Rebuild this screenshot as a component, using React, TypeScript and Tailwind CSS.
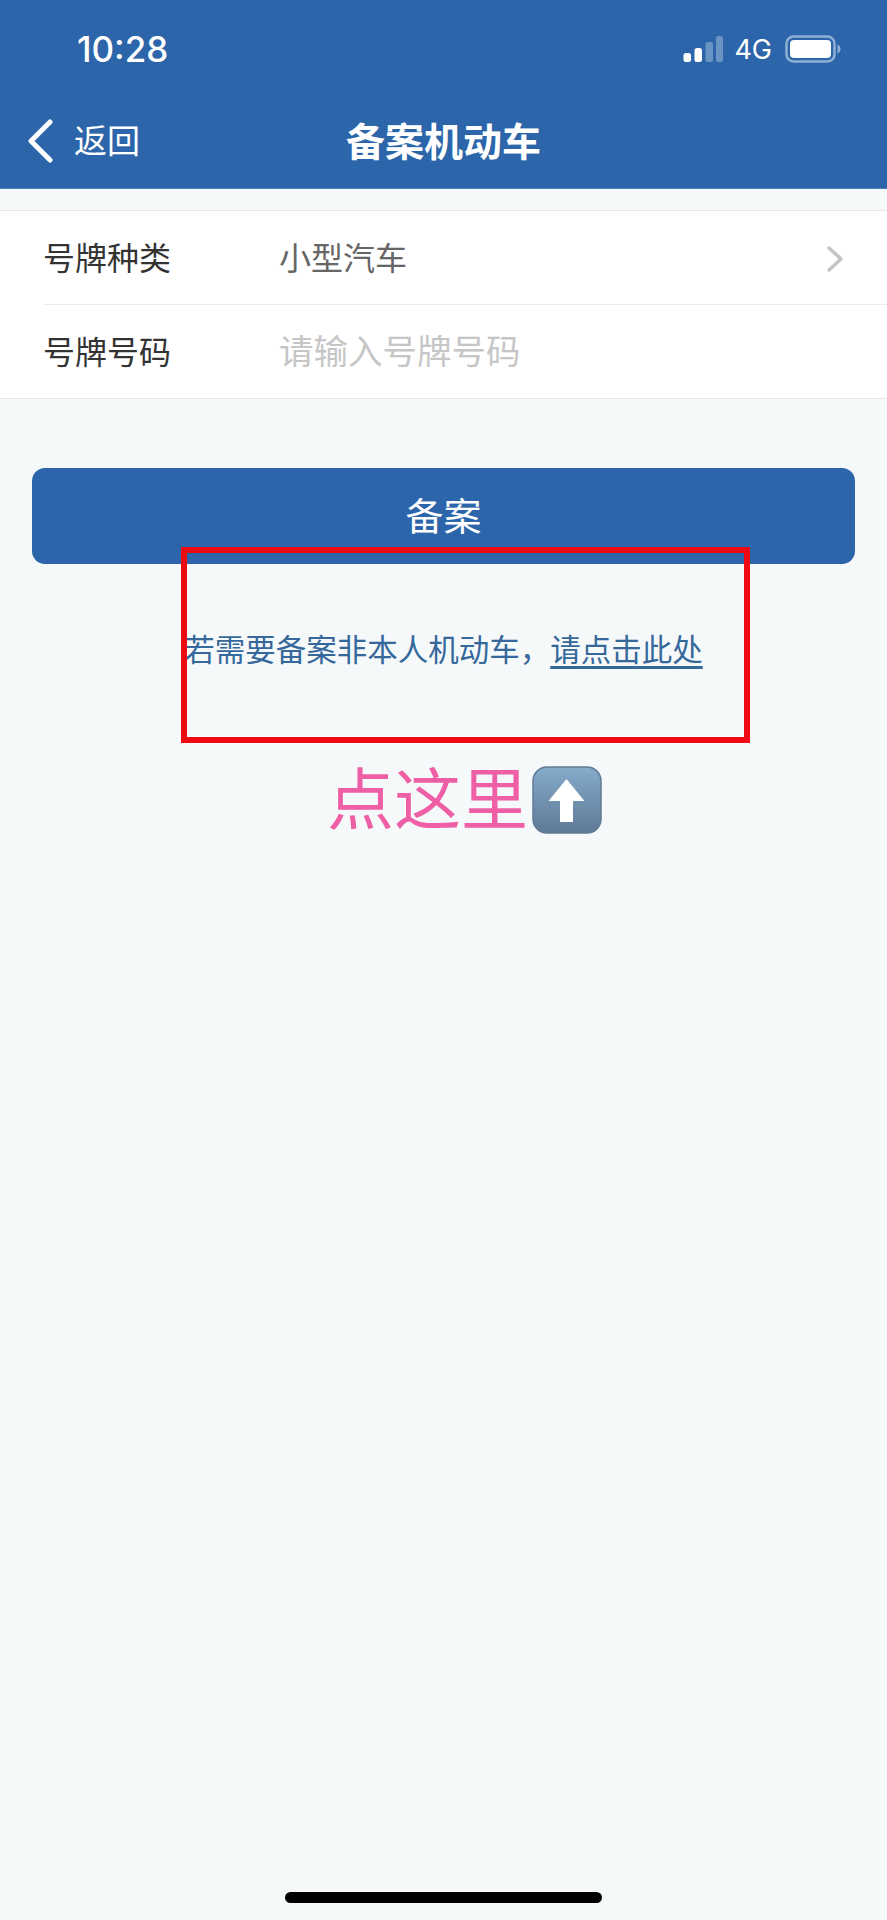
// App.tsx
const CJK = "font-['Inter','Noto_Sans_CJK_SC',sans-serif]";

function StatusIcons() {
  return (
    <div className="flex items-center">
      <svg width="40" height="28" viewBox="0 0 40 28" className="mr-[11px]">
        <rect x="0.5" y="18" width="7.5" height="9" rx="2.5" fill="#ffffff" />
        <rect x="11.5" y="13" width="7.5" height="14" rx="2.5" fill="#ffffff" />
        <rect x="22.5" y="7" width="7.5" height="20" rx="2.5" fill="#6a94c4" />
        <rect x="33" y="1" width="7" height="26" rx="2.5" fill="#6a94c4" />
      </svg>
      <span className="text-[27px] leading-none text-white mr-[13px] font-['Inter',sans-serif]">4G</span>
      <svg width="56" height="28" viewBox="0 0 56 28">
        <rect x="1.5" y="1.5" width="48" height="25" rx="7" fill="none" stroke="#8fb0d4" strokeWidth="2.5" />
        <rect x="5" y="5" width="41" height="18" rx="4" fill="#ffffff" />
        <path d="M52.5 9.5c2 .6 3 2.4 3 4.5s-1 3.9-3 4.5z" fill="#8fb0d4" />
      </svg>
    </div>
  );
}

function Header() {
  return (
    <header className="relative h-[189px] bg-[#2c65a9] border-b border-[#4a7db8]">
      <div className="flex items-center justify-between h-[98px] pl-[77px] pr-[46px]">
        <span className="text-[35px] leading-none font-medium text-white font-['Inter',sans-serif]">10:28</span>
        <StatusIcons />
      </div>
      <div className="relative flex items-center justify-center h-[86px]">
        <div className="absolute left-[27px] top-0 h-full flex items-center">
          <svg width="26" height="44" viewBox="0 0 26 44" fill="none" className="mr-[21px]">
            <path d="M23 3 4 22l19 19" stroke="#ffffff" strokeWidth="5" strokeLinecap="round" strokeLinejoin="round" />
          </svg>
          <span className="text-[33px] leading-none text-white">返回</span>
        </div>
        <h1 className="text-[39px] leading-none font-bold text-white">备案机动车</h1>
      </div>
    </header>
  );
}

function FormRow({ label, children }: { label: string; children: React.ReactNode }) {
  return (
    <div className="flex items-center h-[93px] pt-[2px] pr-[43px]">
      <span className="w-[236px] text-[32px] leading-none text-[#333333]">{label}</span>
      {children}
    </div>
  );
}

function UpArrowEmoji() {
  return (
    <svg width="70" height="68" viewBox="0 0 70 68" className="shrink-0">
      <defs>
        <linearGradient id="keycap" x1="0" y1="0" x2="0" y2="1">
          <stop offset="0" stopColor="#85abcb" />
          <stop offset="1" stopColor="#5e7a96" />
        </linearGradient>
      </defs>
      <rect x="1" y="1" width="68" height="66" rx="14" fill="url(#keycap)" stroke="#5f7b96" strokeWidth="1.5" />
      <path d="M34.5 13 52.5 35H41V56H28V35H16.5z" fill="#ffffff" />
    </svg>
  );
}

export default function App() {
  return (
    <div className={`relative w-[887px] h-[1920px] overflow-hidden bg-[#f5f9fa] flex flex-col ${CJK}`}>
      <Header />

      <section className="mt-[21px] bg-white border-y border-[#e6e8ea] pl-[43px]">
        <div className="border-b border-[#ececec]">
          <FormRow label="号牌种类">
            <span className="flex-1 text-[32px] leading-none text-[#666666]">小型汽车</span>
            <svg width="18" height="26" viewBox="0 0 18 26" fill="none">
              <path d="M3 2l12 11L3 24" stroke="#c4c4c4" strokeWidth="3.5" strokeLinecap="round" strokeLinejoin="round" />
            </svg>
          </FormRow>
        </div>
        <FormRow label="号牌号码">
          <span className="flex-1 text-[34.5px] leading-none text-[#c6c6c6]">请输入号牌号码</span>
        </FormRow>
      </section>

      <button className="mt-[69px] mx-[32px] h-[96px] shrink-0 rounded-[13px] bg-[#2c65a9] text-white text-[38px] leading-none">
        备案
      </button>

      <p className="mt-[68px] text-center text-[30.5px] leading-[36px] text-[#36689b]">
        若需要备案非本人机动车，
        <span className="underline underline-offset-[5px]">请点击此处</span>
      </p>

      <div className="mt-[97px] flex items-center justify-center pl-[42px]">
        <span className="text-[67px] leading-[70px] text-[#ef5fa5]">点这里</span>
        <span className="ml-[4px]"><UpArrowEmoji /></span>
      </div>

      <div className="absolute left-[181px] top-[547px] w-[569px] h-[196px] border-[6px] border-[#ee0a12]" />

      {/* home indicator */}
      <div className="absolute left-[285px] top-[1892px] w-[317px] h-[11px] rounded-full bg-black" />
    </div>
  );
}
